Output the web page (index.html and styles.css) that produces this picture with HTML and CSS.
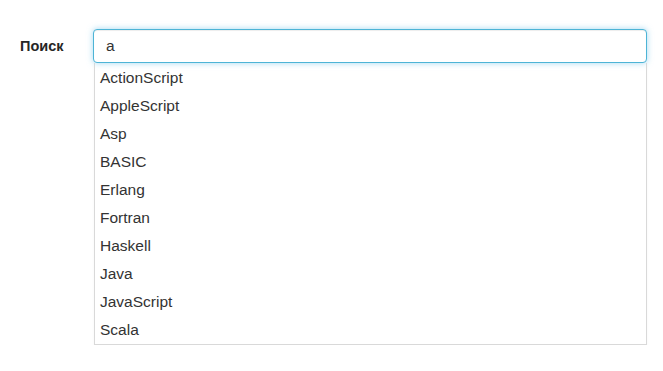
FILE: index.html
```html
<!DOCTYPE html>
<html lang="ru">
<head>
    <meta charset="UTF-8">
    <meta name="viewport" content="width=device-width, initial-scale=1.0">
    <title>Поиск</title>
    <link rel="stylesheet" href="styles.css">
</head>
<body>
<div class="search-row">
    <label class="search-label" for="search">Поиск</label>
    <div class="search-box">
        <input id="search" class="search-input" type="text" value="a" autocomplete="off" autofocus>
        <ul class="suggestions">
            <li>ActionScript</li>
            <li>AppleScript</li>
            <li>Asp</li>
            <li>BASIC</li>
            <li>Erlang</li>
            <li>Fortran</li>
            <li>Haskell</li>
            <li>Java</li>
            <li>JavaScript</li>
            <li>Scala</li>
        </ul>
    </div>
</div>
</body>
</html>
```

FILE: styles.css
```css
body {
    margin: 0;
    background-color: #ffffff;
    font-family: 'Liberation Sans', Arial, sans-serif;
    color: #333333;
}

.search-row {
    display: flex;
    align-items: flex-start;
    padding: 29px 16px 0 20px;
}

.search-label {
    width: 73px;
    flex-shrink: 0;
    font-size: 14.5px;
    font-weight: bold;
    line-height: 34px;
    color: #262626;
}

.search-box {
    width: 555px;
}

.search-input {
    display: block;
    box-sizing: border-box;
    width: 100%;
    height: 34px;
    margin: 0;
    padding: 0 12px;
    font-family: 'Liberation Sans', Arial, sans-serif;
    font-size: 15.5px;
    color: #333333;
    border: 1px solid #4db4d6;
    border-radius: 4px;
    box-shadow: inset 0 1px 1px rgba(0, 0, 0, 0.075), 0 0 6px rgba(102, 190, 233, 0.6);
    outline: none;
    caret-color: #000000;
}

.suggestions {
    list-style: none;
    margin: 0 0 0 1px;
    padding: 1px 0 0 0;
    border: 1px solid #d9d9d9;
    border-top: none;
    box-shadow: 0 2px 3px rgba(0, 0, 0, 0.04);
}

.suggestions li {
    height: 28px;
    line-height: 28px;
    padding: 0 5px;
    font-size: 15.5px;
    color: #333333;
}
```
